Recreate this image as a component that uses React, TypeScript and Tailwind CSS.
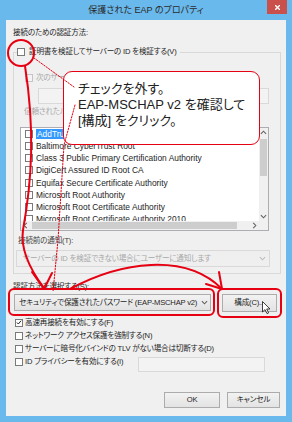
import React from "react";

const jp = "font-['Liberation_Sans','Noto_Sans_CJK_JP',sans-serif] [font-feature-settings:'palt']";

const certs = [
  "AddTrust External CA Root",
  "Baltimore CyberTrust Root",
  "Class 3 Public Primary Certification Authority",
  "DigiCert Assured ID Root CA",
  "Equifax Secure Certificate Authority",
  "Microsoft Root Authority",
  "Microsoft Root Certificate Authority",
  "Microsoft Root Certificate Authority 2010",
];

const chevrons: Record<string, string> = {
  down: "M1 2.5 L4 5.5 L7 2.5",
  up: "M1 5.5 L4 2.5 L7 5.5",
  left: "M5.5 1 L2.5 4 L5.5 7",
  right: "M2.5 1 L5.5 4 L2.5 7",
};

function Chevron({ dir = "down", color = "#606060" }: { dir?: string; color?: string }) {
  return (
    <svg viewBox="0 0 8 8" className="h-[7px] w-[7px]">
      <path d={chevrons[dir]} fill="none" stroke={color} strokeWidth="1.2" />
    </svg>
  );
}

function Check({ checked = false, disabled = false }: { checked?: boolean; disabled?: boolean }) {
  return (
    <span
      className={`flex h-[8px] w-[8px] shrink-0 items-center justify-center border ${
        disabled ? "border-[#c4c4c4] bg-[#f4f4f4]" : "border-[#7a7a7a] bg-white"
      }`}
    >
      {checked && (
        <svg viewBox="0 0 8 8" className="h-[7px] w-[7px]">
          <path d="M1.2 4 L3.1 6 L6.8 1.6" fill="none" stroke="#1e1e1e" strokeWidth="1.3" />
        </svg>
      )}
    </span>
  );
}

const btn =
  "flex items-center justify-center border border-[#acacac] bg-linear-to-b from-[#f2f2f2] to-[#e3e3e3] text-[#1e1e1e] whitespace-nowrap";

export default function App() {
  return (
    <div
      className={`relative flex h-[422px] w-[292px] flex-col bg-[#69b9ec] text-[7.6px] leading-[10px] tracking-[-0.2px] text-[#1e1e1e] ${jp}`}
    >
      {/* title bar */}
      <div className="grid h-[20px] grid-cols-[1fr_auto_1fr] items-start">
        <div />
        <div className="mt-[5px] text-[9px] leading-[11px] tracking-normal text-[#2a2a2a]">保護された EAP のプロパティ</div>
        <div className="flex justify-end pr-[5px]">
          <div className="flex h-[14px] w-[20px] items-center justify-center bg-[#c9504b]">
            <svg viewBox="0 0 6 6" className="h-[5px] w-[5px]">
              <path d="M0 0 L6 6 M6 0 L0 6" stroke="white" strokeWidth="1.6" />
            </svg>
          </div>
        </div>
      </div>

      {/* client area */}
      <div className="mx-[6px] flex h-[396px] flex-col bg-[#f0f0f0] pl-[7px] pt-[8px]">
        <div className="h-[10px]">接続のための認証方法:</div>

        {/* group box */}
        <div className="mt-[14px] flex w-[268px] flex-col border border-[#d8d8d8] pb-[6px]">
          <div className="-mt-[6px] ml-[3px] flex h-[10px] w-fit items-center gap-[4px] whitespace-nowrap bg-[#f0f0f0] pr-[3px]">
            <Check />
            <span>証明書を検証してサーバーの ID を検証する(V)</span>
          </div>

          <div className="ml-[11px] mt-[16px] flex h-[10px] items-center gap-[3px] whitespace-nowrap text-[#a8a8a8]">
            <Check disabled />
            <span>次のサーバーに接続する (例: srv1; srv2; .*\.srv3\.com)(O):</span>
          </div>
          <div className="ml-[24px] mt-[5px] h-[16px] w-[231px] border border-[#d9d9d9] bg-[#f3f3f3]" />

          <div className="ml-[10px] mt-[3px] h-[10px] text-[#a8a8a8]">信頼されたルート証明機関(R):</div>

          {/* cert list */}
          <div className="ml-[6px] mt-[10px] grid h-[104px] w-[249px] grid-cols-[1fr_9px] grid-rows-[1fr_9px] border border-[#abadb3] bg-white">
            <div className="flex flex-col overflow-hidden pl-[4px] font-['Liberation_Sans',sans-serif] text-[8.4px] tracking-normal">
              {certs.map((c, i) => (
                <div key={c} className="flex h-[12.15px] shrink-0 items-center gap-[3px] whitespace-nowrap">
                  <Check />
                  <span className={i === 0 ? "bg-[#3399ff] px-[1px] text-white" : ""}>{c}</span>
                </div>
              ))}
            </div>
            <div className="flex flex-col bg-[#f0f0f0]">
              <div className="flex h-[9px] items-center justify-center">
                <Chevron dir="up" />
              </div>
              <div className="flex-1">
                <div className="mx-auto mt-[2px] h-[37px] w-[7px] bg-[#cdcdcd]" />
              </div>
              <div className="flex h-[9px] items-center justify-center">
                <Chevron dir="down" />
              </div>
            </div>
            <div className="flex bg-[#f0f0f0]">
              <div className="flex w-[9px] items-center justify-center">
                <Chevron dir="left" />
              </div>
              <div className="flex flex-1 items-center">
                <div className="ml-[2px] h-[7px] w-[205px] bg-[#cdcdcd]" />
              </div>
              <div className="flex w-[9px] items-center justify-center">
                <Chevron dir="right" />
              </div>
            </div>
            <div className="bg-[#f0f0f0]" />
          </div>

          <div className="ml-[4px] mt-[5px] h-[10px] text-[#444]">接続前の通知(T):</div>
          <div className="ml-[2px] mt-[4px] flex h-[17px] w-[254px] items-center justify-between whitespace-nowrap border border-[#d9d9d9] bg-[#efefef] pl-[6px] pr-[3px] text-[#a8a8a8]">
            <span>サーバーの ID を検証できない場合にユーザーに通知します</span>
            <Chevron color="#bdbdbd" />
          </div>
        </div>

        <div className="mt-[8px] h-[10px]">認証方法を選択する(S):</div>
        <div className="mt-[2px] flex items-start gap-[11px]">
          <div className="ml-[1px] flex h-[17px] w-[197px] items-center justify-between overflow-hidden whitespace-nowrap border border-[#acacac] bg-linear-to-b from-[#f2f2f2] to-[#e3e3e3] pl-[4px] pr-[2px]">
            <span>セキュリティで保護されたパスワード (EAP-MSCHAP v2)</span>
            <Chevron />
          </div>
          <div className={`${btn} h-[18px] w-[55px]`}>構成(C)...</div>
        </div>

        <div className="ml-[2px] mt-[4px] flex flex-col whitespace-nowrap">
          <div className="flex h-[13px] items-center gap-[2px]">
            <Check checked />
            <span>高速再接続を有効にする(F)</span>
          </div>
          <div className="flex h-[13px] items-center gap-[2px]">
            <Check />
            <span>ネットワーク アクセス保護を強制する(N)</span>
          </div>
          <div className="flex h-[13px] items-center gap-[2px]">
            <Check />
            <span>サーバーに暗号化バインドの TLV がない場合は切断する(D)</span>
          </div>
          <div className="flex items-start">
            <div className="flex h-[13px] w-[123px] items-center gap-[2px]">
              <Check />
              <span>ID プライバシーを有効にする(I)</span>
            </div>
            <div className="mt-[2px] h-[15px] w-[127px] border border-[#d9d9d9] bg-[#f3f3f3]" />
          </div>
        </div>

        <div className="mr-[6px] mt-[20px] flex justify-end gap-[7px]">
          <div className={`${btn} h-[16px] w-[56px]`}>OK</div>
          <div className={`${btn} h-[16px] w-[53px]`}>キャンセル</div>
        </div>
      </div>

      {/* callout */}
      <div className="absolute left-[63px] top-[71px] h-[74px] w-[197px] rounded-[9px] border-[1.5px] border-[#e60012] bg-white pl-[14px] pt-[9px] text-[13px] leading-[16px] tracking-normal text-[#222]">
        <div>チェックを外す。</div>
        <div className="whitespace-nowrap">EAP-MSCHAP v2 を確認して</div>
        <div>[構成] をクリック。</div>
      </div>

      {/* red annotations */}
      <svg className="pointer-events-none absolute left-0 top-0 h-[422px] w-[292px]" viewBox="0 0 292 422">
        <g fill="none" stroke="#e60012" strokeLinecap="round" strokeLinejoin="round">
          <ellipse cx="21" cy="53" rx="13" ry="13" strokeWidth="2" />
          <path d="M25 66 C35 130 32 180 23 230 C20 250 32 272 44 288" strokeWidth="2" />
          <path d="M32 272 L44 289 L52 273" strokeWidth="2" />
          <path d="M70 289 C120 262 185 252 222 289" strokeWidth="2" />
          <path d="M206 284 L222 289 L219 272" strokeWidth="2" />
          <rect x="9" y="289" width="205" height="26" rx="5" strokeWidth="2" />
          <rect x="218" y="289" width="63" height="28" rx="5" strokeWidth="2" />
          <path d="M34 58 L74 87" strokeWidth="1" strokeDasharray="1.5 1.5" />
          <path d="M75 105 L64 145 L58 240 L53 292" strokeWidth="1" strokeDasharray="1.5 1.5" />
        </g>
        <path
          d="M262.5 301.5 L262.5 312 L265 309.6 L267 313.6 L268.6 312.9 L266.7 309 L270 309 Z"
          fill="white"
          stroke="#111"
          strokeWidth="0.8"
        />
      </svg>
    </div>
  );
}
